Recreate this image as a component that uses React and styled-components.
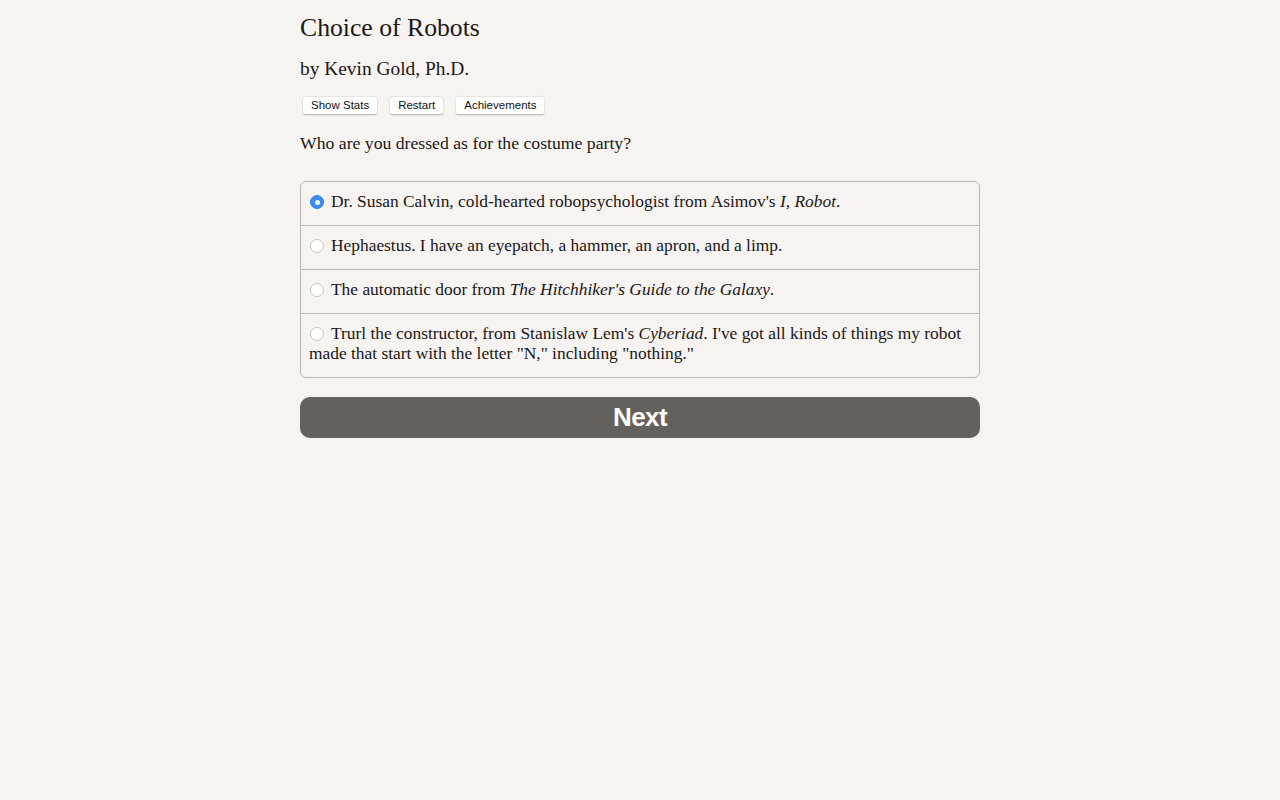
import React, { useState } from "react";
import styled, { createGlobalStyle } from "styled-components";

const Global = createGlobalStyle`
  html, body { margin: 0; padding: 0; background: #f7f3f0; }
  body { font-family: "Liberation Serif", "Times New Roman", serif; color: #1a1817; }
`;

const Page = styled.div`
  width: 680px;
  margin: 0 auto;
  padding-top: 12px;
`;

const Title = styled.h1`
  font-size: 25.7px;
  font-weight: normal;
  margin: 0;
  line-height: 32px;
`;

const Author = styled.h2`
  font-size: 19.4px;
  font-weight: normal;
  margin: 12px 0 0;
  line-height: 26px;
`;

const Toolbar = styled.div`
  display: flex;
  gap: 13px;
  margin: 15px 0 0 3px;
`;

const ToolButton = styled.button`
  font-family: "Liberation Sans", Arial, sans-serif;
  font-size: 11.5px;
  color: #111;
  background: #fff;
  border: none;
  border-radius: 2px;
  box-shadow: 0 0.5px 1.5px rgba(0,0,0,0.3);
  padding: 2px 8px;
  height: 17px;
  line-height: 13px;
`;

const Question = styled.p`
  font-size: 17.7px;
  margin: 17px 0 0;
  line-height: 24px;
`;

const Choices = styled.form`
  margin-top: 26px;
  border: 1px solid #bdb7b3;
  border-radius: 6px;
  overflow: hidden;
`;

const Choice = styled.label`
  display: block;
  padding: 9px 8px 14px;
  font-size: 17.4px;
  line-height: 20px;
  & + & { border-top: 1px solid #bdb7b3; }
`;

const Radio = styled.span`
  display: inline-block;
  width: 14px;
  height: 14px;
  border-radius: 50%;
  box-sizing: border-box;
  margin: 0 7px 0 1px;
  vertical-align: -2px;
  background: ${p => (p.$checked ? "#3b8cf0" : "#fff")};
  border: 1px solid ${p => (p.$checked ? "#3282e6" : "#cbc6c3")};
  position: relative;
  &::after {
    content: "";
    display: ${p => (p.$checked ? "block" : "none")};
    position: absolute;
    left: 50%; top: 50%;
    width: 5px; height: 5px;
    margin: -2.5px 0 0 -2.5px;
    border-radius: 50%;
    background: #fff;
  }
`;

const NextButton = styled.button`
  display: block;
  width: 100%;
  margin-top: 19px;
  height: 41px;
  border: none;
  border-radius: 10px;
  background: #64605c;
  color: #fff;
  font-family: "Liberation Sans", Arial, sans-serif;
  font-weight: bold;
  font-size: 26px;
  letter-spacing: -0.6px;
`;

const options = [
  <>Dr. Susan Calvin, cold-hearted robopsychologist from Asimov's <i>I, Robot</i>.</>,
  <>Hephaestus. I have an eyepatch, a hammer, an apron, and a limp.</>,
  <>The automatic door from <i>The Hitchhiker's Guide to the Galaxy</i>.</>,
  <>Trurl the constructor, from Stanislaw Lem's <i>Cyberiad</i>. I've got all kinds of things my robot made that start with the letter "N," including "nothing."</>,
];

export default function App() {
  const [sel, setSel] = useState(0);
  return (
    <>
      <Global />
      <Page>
        <Title>Choice of Robots</Title>
        <Author>by Kevin Gold, Ph.D.</Author>
        <Toolbar>
          <ToolButton>Show Stats</ToolButton>
          <ToolButton>Restart</ToolButton>
          <ToolButton>Achievements</ToolButton>
        </Toolbar>
        <Question>Who are you dressed as for the costume party?</Question>
        <Choices>
          {options.map((o, i) => (
            <Choice key={i} onClick={() => setSel(i)}>
              <Radio $checked={sel === i} />
              {o}
            </Choice>
          ))}
        </Choices>
        <NextButton>Next</NextButton>
      </Page>
    </>
  );
}
